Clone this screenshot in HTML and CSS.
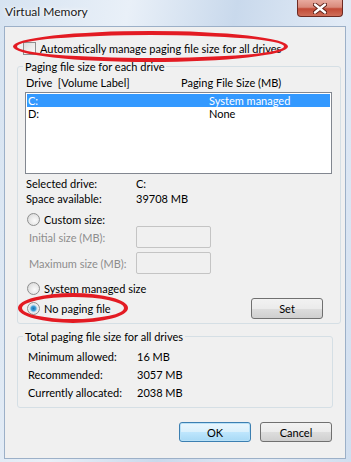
FILE: index.html
```html
<!DOCTYPE html>
<html lang="en">
  <head>
    <meta charset="UTF-8" />
    <meta name="viewport" content="width=device-width, initial-scale=1.0" />
    <title>Virtual Memory</title>
    <link rel="stylesheet" href="styles.css">
  </head>
  <body>
    <div class="window">
      <div class="titlebar">
        <span class="title">Virtual Memory</span>
        <div class="close-btn">
          <svg width="14" height="11" viewBox="0 0 14 11">
            <path d="M2 1.5 L12 9.5 M12 1.5 L2 9.5" stroke="#5a1d15" stroke-width="4.2" stroke-linecap="round" />
            <path d="M2 1.5 L12 9.5 M12 1.5 L2 9.5" stroke="#fff" stroke-width="2.4" stroke-linecap="round" />
          </svg>
        </div>
      </div>

      <div class="client">
        <div class="auto-row">
          <span class="checkbox"></span>
          <span>Automatically manage paging file size for all drives</span>
        </div>

        <fieldset class="group group-drives">
          <legend>Paging file size for each drive</legend>
          <div class="list-header">
            <span class="col-drive">Drive&nbsp;&nbsp;[Volume Label]</span>
            <span>Paging File Size (MB)</span>
          </div>
          <div class="listbox">
            <div class="list-row selected">
              <span class="col-drive">C:</span>
              <span class="col-size">System managed</span>
            </div>
            <div class="list-row">
              <span class="col-drive">D:</span>
              <span class="col-size">None</span>
            </div>
          </div>

          <div class="info-grid">
            <span>Selected drive:</span><span>C:</span>
            <span>Space available:</span><span>39708 MB</span>
          </div>

          <div class="radio-row custom-row">
            <span class="radio"></span>
            <span>Custom size:</span>
          </div>
          <div class="size-grid">
            <span class="disabled">Initial size (MB):</span><span class="textbox"></span>
            <span class="disabled">Maximum size (MB):</span><span class="textbox"></span>
          </div>

          <div class="radio-row system-row">
            <span class="radio"></span>
            <span>System managed size</span>
          </div>
          <div class="radio-row none-row">
            <span class="radio checked"></span>
            <span class="grow">No paging file</span>
            <button class="btn btn-set">Set</button>
          </div>
        </fieldset>

        <fieldset class="group group-total">
          <legend>Total paging file size for all drives</legend>
          <div class="total-grid">
            <span>Minimum allowed:</span><span>16 MB</span>
            <span>Recommended:</span><span>3057 MB</span>
            <span>Currently allocated:</span><span>2038 MB</span>
          </div>
        </fieldset>

        <div class="actions">
          <button class="btn btn-default">OK</button>
          <button class="btn">Cancel</button>
        </div>
      </div>

      <div class="mark mark-auto"></div>
      <div class="mark mark-none"></div>
    </div>
  </body>
</html>
```

FILE: styles.css
```css
html, body {
  margin: 0;
  padding: 0;
}
body {
  width: 351px;
  height: 462px;
  overflow: hidden;
  font-family: Lato, "Noto Sans", sans-serif;
  font-size: 11px;
  color: #000;
}
.window {
  position: relative;
  height: 462px;
  padding: 0 5px 3px 4px;
  box-sizing: border-box;
  background: linear-gradient(100deg, #d6e3f1 0%, #e9f0f8 30%, #c9d9ec 55%, #e2ebf6 80%, #d0deef 100%);
}
.titlebar {
  display: flex;
  justify-content: space-between;
  height: 26px;
}
.title {
  padding: 4px 0 0 1px;
  font-size: 12px;
  color: #1a1a1a;
  text-shadow: 0 0 6px #fff, 0 0 3px #fff;
}
.close-btn {
  display: flex;
  align-items: center;
  justify-content: center;
  width: 44px;
  height: 16px;
  margin-right: 3px;
  border: 1px solid #6d2a22;
  border-top: none;
  border-radius: 0 0 4px 4px;
  background: linear-gradient(#e8aa9e 0%, #d98a7b 45%, #c24a36 55%, #cf6f5a 100%);
}
.client {
  height: 433px;
  box-sizing: border-box;
  border: 1px solid #9cb0c8;
  background: #f0f0f0;
  padding: 0 4px 0 12px;
}
.auto-row {
  display: flex;
  align-items: center;
  height: 13px;
  margin-top: 15px;
  padding-left: 6px;
}
.checkbox {
  width: 11px;
  height: 11px;
  margin-right: 4px;
  border: 1px solid #8f8f8f;
  background: linear-gradient(135deg, #dcdcdc, #fbfbfb);
}
.group {
  margin: 0;
  padding: 0 8px;
  border: 1px solid #d5dfe5;
  border-radius: 3px;
}
.group legend {
  padding: 0 2px;
  margin-left: -3px;
  line-height: 15px;
}
.group-drives {
  margin-top: 4px;
  padding-bottom: 4px;
}
.group-total {
  width: 298px;
  margin-top: 5px;
  padding-bottom: 6px;
}
.list-header {
  display: flex;
  line-height: 15px;
  margin-top: 1px;
}
.col-drive {
  width: 155px;
}
.listbox {
  height: 78px;
  margin: 2px 0 0 -1px;
  padding: 1px;
  border: 1px solid #828790;
  background: #fff;
}
.list-row {
  display: flex;
  height: 13px;
  line-height: 13px;
  padding-left: 1px;
}
.list-row .col-drive {
  width: 181px;
}
.list-row.selected {
  background: #3399ff;
  color: #fff;
}
.info-grid {
  display: grid;
  grid-template-columns: 110px auto;
  line-height: 15px;
  margin-top: 2px;
}
.radio-row {
  display: flex;
  align-items: center;
}
.custom-row {
  height: 13px;
  margin-top: 7px;
}
.system-row {
  height: 14px;
  margin-top: 7px;
}
.none-row {
  height: 21px;
  margin-top: 3px;
  padding-right: 9px;
}
.grow {
  flex: 1;
}
.radio {
  width: 11px;
  height: 11px;
  margin: 0 4px 0 1px;
  border: 1px solid #8e8f8f;
  border-radius: 50%;
  background: radial-gradient(circle at 60% 60%, #fbfbfb 0%, #e4e4e4 60%, #cfcfcf 100%);
}
.radio.checked {
  background: radial-gradient(circle, #1b6fae 0%, #3ea1d9 30%, #c5dcec 45%, #f0f0f0 60%, #d8d8d8 100%);
}
.size-grid {
  display: grid;
  grid-template-columns: 107px 75px;
  grid-auto-rows: 22px;
  row-gap: 4px;
  align-items: center;
  padding-left: 3px;
}
.disabled {
  color: #8d8d8d;
}
.textbox {
  height: 20px;
  border: 1px solid #c4c4c4;
  border-radius: 2px;
  background: #f0f0f0;
}
.total-grid {
  display: grid;
  grid-template-columns: 109px auto;
  grid-auto-rows: 18px;
  align-items: center;
  margin-top: 3px;
  padding-left: 2px;
}
.btn {
  height: 20px;
  padding: 0;
  border: 1px solid #707070;
  border-radius: 3px;
  background: linear-gradient(#f2f2f2 0%, #ebebeb 50%, #dddddd 51%, #cfcfcf 100%);
  font-family: inherit;
  font-size: 11px;
  color: #000;
}
.btn-set {
  width: 72px;
  height: 21px;
}
.btn-default {
  border-color: #3c7fb1;
  box-shadow: inset 0 0 0 1px #b9e1f7;
  background: linear-gradient(#eaf6fd 0%, #d9f0fc 50%, #bee6fd 51%, #a7d9f5 100%);
}
.actions {
  display: flex;
  justify-content: flex-end;
  gap: 9px;
  margin-top: 14px;
  padding-right: 9px;
}
.actions .btn {
  width: 72px;
}
.mark {
  position: absolute;
  border: 4px solid #e31b23;
  border-radius: 50%;
  box-sizing: border-box;
}
.mark-auto {
  left: 13px;
  top: 31px;
  width: 275px;
  height: 31px;
}
.mark-none {
  left: 18px;
  top: 293px;
  width: 110px;
  height: 30px;
}
```
